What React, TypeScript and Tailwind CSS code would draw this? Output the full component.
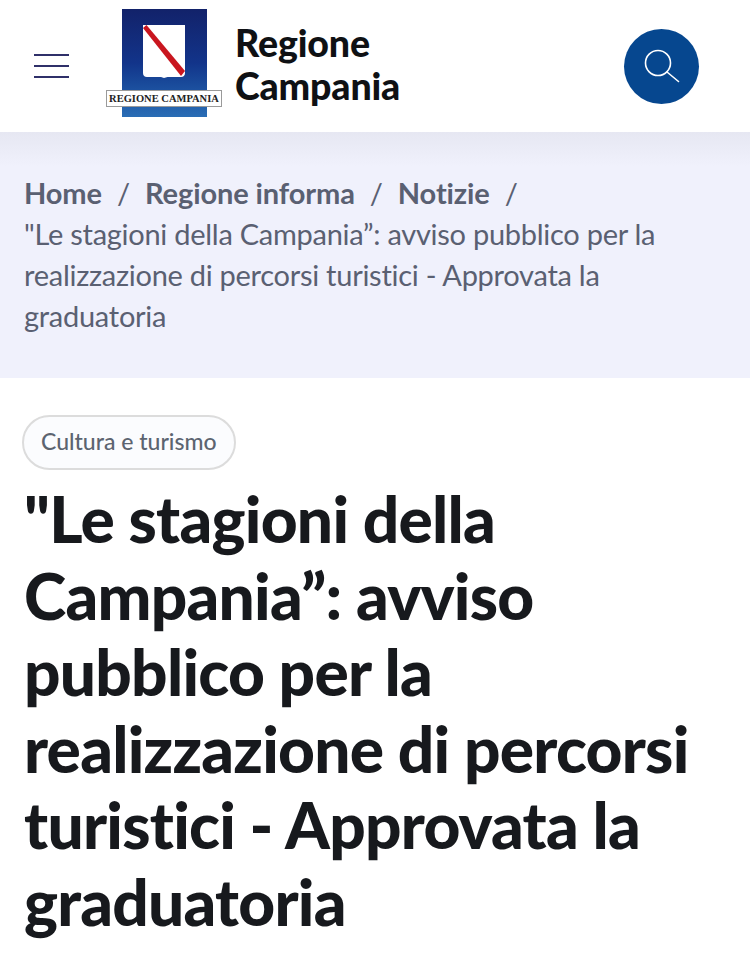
import React from "react";

const font = "font-['Lato','Noto_Sans',sans-serif]";

const Logo = () => (
	<div className="relative h-[117px] w-[116px] self-start">
		<div className="absolute left-[16px] top-[9px] h-[108px] w-[85px] bg-gradient-to-b from-[#12226a] via-[#12348a] to-[#2a6db5]">
			<svg viewBox="0 0 85 108" className="h-full w-full">
				<path d="M21 16H63V64C63 66.500 61.500 68 59 68H45.500L42 69L39 68H25C22.500 68 21 66.500 21 64Z" fill="#fff" />
				<path d="M21 19L24.500 16L63 62L59 67Z" fill="#c9161f" />
			</svg>
		</div>
		<div className="absolute left-0 top-[90px] flex h-[17px] w-[116px] items-center justify-center border border-[#9a9a9a] bg-white font-['Liberation_Serif',serif] text-[10.500px] font-bold whitespace-nowrap text-[#222]">
			REGIONE CAMPANIA
		</div>
	</div>
);

const App = () => {
	return (
		<div className={`h-[956px] w-[750px] overflow-hidden bg-white ${font}`}>
			{/* Header */}
			<header className="flex h-[132px] items-center pl-[34px] pr-[51px]">
				<div className="flex w-[35px] flex-col gap-[9px]">
					<span className="h-[2px] bg-[#2f3069]" />
					<span className="h-[2px] bg-[#2f3069]" />
					<span className="h-[2px] bg-[#2f3069]" />
				</div>
				<div className="ml-[37px] self-start">
					<Logo />
				</div>
				<div className="mb-[4px] ml-[13px] text-[37.500px] leading-[43px] font-black tracking-[-0.15px] text-[#0f1114]">
					Regione
					<br />
					Campania
				</div>
				<div className="ml-auto flex h-[75px] w-[75px] items-center justify-center rounded-full bg-[#06478f]">
					<svg viewBox="0 0 36 36" className="h-[36px] w-[36px]" fill="none" stroke="#fff" strokeWidth="1.600">
						<circle cx="14" cy="15" r="12.500" />
						<path d="M23 24L34.500 33.500" strokeLinecap="round" />
					</svg>
				</div>
			</header>

			{/* Breadcrumb */}
			<nav className="h-[246px] bg-gradient-to-b from-[#e6e7f2] from-0% to-[#f0f1fc] to-[14%] px-6 pt-[40px] text-[29px] leading-[41px] tracking-[-0.27px] text-[#5a6072]">
				<div className="flex gap-[15px] font-bold tracking-[-0.1px]">
					<span>Home</span>
					<span className="font-normal">/</span>
					<span>Regione informa</span>
					<span className="font-normal">/</span>
					<span>Notizie</span>
					<span className="font-normal">/</span>
				</div>
				<div>
					"Le stagioni della Campania”: avviso pubblico per la
					<br />
					realizzazione di percorsi turistici - Approvata la
					<br />
					graduatoria
				</div>
			</nav>

			{/* Article */}
			<main className="px-6 pt-[37px]">
				<span className="ml-[-2px] inline-flex h-[55px] items-center rounded-full border-2 border-[#dcdcdc] bg-[#fbfcfe] px-[17px] pb-[2px] text-[23px] font-medium text-[#5c6470]">
					Cultura e turismo
				</span>
				<h1 className="mt-[11px] text-[64px] leading-[76.500px] font-black tracking-[-0.75px] text-[#17191d]">
					"Le stagioni della
					<br />
					Campania”: avviso
					<br />
					pubblico per la
					<br />
					realizzazione di percorsi
					<br />
					turistici - Approvata la
					<br />
					graduatoria
				</h1>
			</main>
		</div>
	);
};

export default App;
